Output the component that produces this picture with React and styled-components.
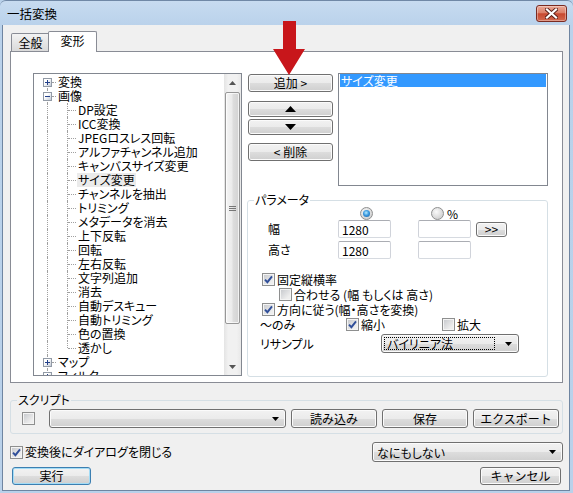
import React from 'react';
import styled, { createGlobalStyle } from 'styled-components';

const GlobalStyle = createGlobalStyle`
  html, body {
    margin: 0;
    padding: 0;
    background: #b9d1ea;
  }
  body {
    font-family: "Noto Sans CJK JP", "Liberation Sans", sans-serif;
    font-size: 12px;
    color: #000;
    font-feature-settings: "palt";
  }
  * {
    box-sizing: border-box;
  }
`;

const Window = styled.div`
  position: relative;
  width: 573px;
  height: 493px;
  display: flex;
  flex-direction: column;
  background: linear-gradient(#c7dbf0 0px, #bad2eb 24px, #b9d1ea 100%);
  border-top: 1px solid #7088a6;
  border-radius: 6px 6px 0 0;
  overflow: hidden;
`;

const TitleBar = styled.div`
  height: 24px;
  flex: none;
  display: flex;
  align-items: center;
  justify-content: space-between;
  padding: 2px 6px 0 6px;
`;

const Title = styled.span`
  font-size: 12.5px;
  line-height: 14px;
  margin-left: 1px;
`;

const CloseButton = styled.div`
  width: 31px;
  height: 17px;
  margin-top: -1px;
  display: flex;
  align-items: center;
  justify-content: center;
  border: 1px solid #7a2b22;
  border-radius: 3px;
  background: linear-gradient(#eaa897 0%, #dc8069 45%, #c8482f 52%, #d2694f 100%);
  box-shadow: inset 0 0 0 1px rgba(255, 255, 255, 0.35);
`;

const Client = styled.div`
  flex: 1;
  margin: 0 3px 2px 2px;
  border: 1px solid #6f85a1;
  border-top: none;
  background: #f0f0f0;
  padding: 6px 6px 0 7px;
  display: flex;
  flex-direction: column;
`;

const TabStrip = styled.div`
  height: 20px;
  display: flex;
  align-items: flex-end;
  padding-left: 1px;
`;

const Tab = styled.div`
  position: relative;
  z-index: ${(p) => (p.$active ? 2 : 1)};
  width: ${(p) => (p.$active ? 49 : 39)}px;
  height: ${(p) => (p.$active ? 21 : 18)}px;
  margin-left: ${(p) => (p.$active ? -2 : 0)}px;
  margin-bottom: ${(p) => (p.$active ? -1 : 0)}px;
  border: 1px solid #898c95;
  border-bottom: none;
  border-radius: 2px 2px 0 0;
  background: ${(p) => (p.$active ? '#fff' : 'linear-gradient(#f3f3f3, #e6e6e6 50%, #dadada)')};
  display: flex;
  align-items: center;
  justify-content: center;
  padding-bottom: ${(p) => (p.$active ? 3 : 0)}px;
  line-height: 14px;
`;

const Panel = styled.div`
  height: 332px;
  flex: none;
  border: 1px solid #898c95;
  background: #fff;
  padding: 21px 0 0 22px;
  display: flex;
  align-items: flex-start;
`;

const TreeBox = styled.div`
  width: 209px;
  height: 303px;
  flex: none;
  border: 1px solid #828790;
  display: flex;
  background: #fff;
`;

const TreeItems = styled.div`
  flex: 1;
  overflow: hidden;
  padding: 1px 0 0 3px;
`;

const TreeRow = styled.div`
  display: flex;
  height: 14px;
  align-items: center;
  white-space: nowrap;
`;

const Guide = styled.span`
  position: relative;
  flex: none;
  width: 20px;
  height: 14px;

  &::before {
    content: '';
    display: ${(p) => (p.$up || p.$down ? 'block' : 'none')};
    position: absolute;
    left: 10px;
    top: ${(p) => (p.$up ? '0' : '7px')};
    bottom: ${(p) => (p.$down ? '0' : '7px')};
    border-left: 1px dotted #a0a0a0;
  }

  &::after {
    content: '';
    display: ${(p) => (p.$stub ? 'block' : 'none')};
    position: absolute;
    left: ${(p) => (p.$box ? 15 : 11)}px;
    right: 1px;
    top: 7px;
    border-top: 1px dotted #a0a0a0;
  }
`;

const Expander = styled.span`
  position: absolute;
  z-index: 1;
  left: 6px;
  top: 3px;
  width: 9px;
  height: 9px;
  border: 1px solid #929aa6;
  background: linear-gradient(135deg, #ffffff 35%, #c3cad5);

  &::before {
    content: '';
    position: absolute;
    left: 1px;
    right: 1px;
    top: 3px;
    height: 1px;
    background: #24418a;
  }

  &::after {
    content: '';
    display: ${(p) => (p.$open ? 'none' : 'block')};
    position: absolute;
    top: 1px;
    bottom: 1px;
    left: 3px;
    width: 1px;
    background: #24418a;
  }
`;

const TreeLabel = styled.span`
  padding: 0 1px;
  height: 14px;
  line-height: 14px;
  background: ${(p) => (p.$selected ? '#ebebeb' : 'transparent')};
`;

const ScrollBar = styled.div`
  width: 17px;
  flex: none;
  display: flex;
  flex-direction: column;
  background: linear-gradient(to right, #e4e4e4, #f1f1f1 25%, #f1f1f1 75%, #e8e8e8);
`;

const ScrollArrow = styled.div`
  height: 17px;
  flex: none;
  display: flex;
  align-items: center;
  justify-content: center;
`;

const ScrollTrack = styled.div`
  flex: 1;
`;

const Thumb = styled.div`
  height: 232px;
  margin: 1px 1px 0 1px;
  border: 1px solid #979797;
  border-radius: 2px;
  background: linear-gradient(to right, #f5f5f5, #ebebeb 45%, #dddddd 55%, #d3d3d3);
  box-shadow: inset 0 0 0 1px rgba(255, 255, 255, 0.7);
  display: flex;
  align-items: center;
  justify-content: center;
`;

const RightArea = styled.div`
  width: 301px;
  margin-left: 5px;
  display: flex;
  flex-direction: column;
`;

const TopRow = styled.div`
  height: 113px;
  display: flex;
`;

const ButtonColumn = styled.div`
  width: 85px;
  margin-left: 1px;
  padding-top: 1px;
  display: flex;
  flex-direction: column;
`;

const Button = styled.button`
  width: ${(p) => p.$w || 85}px;
  height: ${(p) => p.$h || 18}px;
  flex: none;
  margin: ${(p) => p.$m || '0'};
  padding: 0;
  display: flex;
  align-items: center;
  justify-content: center;
  font-family: inherit;
  font-size: 12px;
  line-height: 14px;
  color: #000;
  border: 1px solid ${(p) => (p.$default ? '#3c7fb1' : '#707070')};
  border-radius: 3px;
  background: linear-gradient(#f2f2f2 0%, #ebebeb 50%, #dddddd 51%, #cfcfcf 100%);
  box-shadow: inset 0 0 0 1px ${(p) => (p.$default ? '#a3dcf6' : '#fbfbfb')};
`;

const ListBox = styled.div`
  width: 210px;
  height: 113px;
  margin-left: 5px;
  border: 1px solid #828790;
  padding: 0 1px;
  background: #fff;
`;

const ListItem = styled.div`
  height: 13px;
  line-height: 13px;
  padding-left: 1px;
  color: ${(p) => (p.$selected ? '#fff' : '#000')};
  background: ${(p) => (p.$selected ? '#3399ff' : 'transparent')};
`;

const Group = styled.fieldset`
  margin: ${(p) => p.$m || '0'};
  width: ${(p) => p.$w}px;
  height: ${(p) => p.$h}px;
  min-width: 0;
  padding: ${(p) => p.$pad};
  border: 1px solid #d5dfe5;
  border-radius: 3px;
  display: flex;
  flex-direction: column;
`;

const Legend = styled.legend`
  padding: 0 1px;
  margin-left: ${(p) => p.$ml}px;
  height: 14px;
  line-height: 14px;
`;

const Row = styled.div`
  display: flex;
  align-items: center;
  height: ${(p) => p.$h}px;
  margin-top: ${(p) => p.$mt || 0}px;
  white-space: nowrap;
`;

const Cell = styled.span`
  flex: none;
  width: ${(p) => p.$w}px;
  padding-left: ${(p) => p.$pl || 0}px;
  line-height: 14px;
`;

const TextBox = styled.input`
  width: 53px;
  height: 18px;
  flex: none;
  margin-left: ${(p) => p.$ml || 0}px;
  padding: 0 0 0 3px;
  border: 1px solid;
  border-color: #abadb3 #d0d3da #d6dae0 #d0d3da;
  border-radius: 2px;
  font-family: inherit;
  font-size: 12px;
  color: #000;
  background: #fff;
  outline: none;
`;

const Radio = styled.span`
  position: relative;
  flex: none;
  width: 13px;
  height: 13px;
  margin-left: ${(p) => p.$ml || 0}px;
  border: 1px solid #8e8f8f;
  border-radius: 50%;
  background: radial-gradient(circle at 40% 35%, #fafafa, #d4d4d4 70%);

  &::after {
    content: '';
    display: ${(p) => (p.$checked ? 'block' : 'none')};
    position: absolute;
    left: 2px;
    top: 2px;
    width: 7px;
    height: 7px;
    border-radius: 50%;
    background: radial-gradient(circle at 45% 40%, #b7ecff 0%, #3c9ae0 45%, #155a9c 100%);
  }
`;

const CheckBox = styled.span`
  position: relative;
  flex: none;
  width: 13px;
  height: 13px;
  margin-left: ${(p) => p.$ml || 0}px;
  margin-right: 2px;
  border: 1px solid #8e8f8f;
  background: #f4f4f4;
  display: flex;
  align-items: center;
  justify-content: center;

  &::before {
    content: '';
    position: absolute;
    inset: 1px;
    background: linear-gradient(135deg, #c9cbcf, #eeeeee 80%);
  }

  svg {
    position: relative;
  }
`;

const Percent = styled.span`
  margin-left: 3px;
  line-height: 13px;
`;

const Combo = styled.div`
  width: ${(p) => p.$w}px;
  height: ${(p) => p.$h || 19}px;
  flex: none;
  margin-left: ${(p) => p.$ml || 0}px;
  display: flex;
  align-items: center;
  border: 1px solid #707070;
  border-radius: 3px;
  background: linear-gradient(#f2f2f2 0%, #ebebeb 50%, #dddddd 51%, #cfcfcf 100%);
  box-shadow: inset 0 0 0 1px #fbfbfb;
  padding: 0 6px 0 2px;
`;

const ComboText = styled.span`
  flex: 1;
  height: 13px;
  line-height: 12px;
  padding-left: ${(p) => (p.$focus ? 2 : 1)}px;
  border: 1px dotted ${(p) => (p.$focus ? '#000' : 'transparent')};
  margin-right: 10px;
`;

const ScriptRow = styled.div`
  display: flex;
  align-items: center;
  height: 19px;
  margin-top: 2px;
`;

const FooterRow = styled.div`
  display: flex;
  align-items: center;
  justify-content: space-between;
  height: ${(p) => p.$h}px;
  margin-top: ${(p) => p.$mt}px;
`;

const CheckLabel = styled.label`
  display: flex;
  align-items: center;
  line-height: 14px;
`;

const Annotation = styled.svg`
  position: absolute;
  left: 273px;
  top: 20px;
`;

const CheckMark = () => (
  <svg width="9" height="9" viewBox="0 0 9 9">
    <path d="M1 4.6 L3.4 7.2 L8 1.4" fill="none" stroke="#2f4e99" strokeWidth="1.9" />
  </svg>
);

const Check = ({ checked, ml, children }) => (
  <CheckLabel>
    <CheckBox $ml={ml}>{checked && <CheckMark />}</CheckBox>
    {children}
  </CheckLabel>
);

const DownArrow = ({ color = '#000' }) => (
  <svg width="7" height="4" viewBox="0 0 7 4">
    <path d="M0 0 H7 L3.5 4 Z" fill={color} />
  </svg>
);

const UpArrow = ({ color = '#000' }) => (
  <svg width="7" height="4" viewBox="0 0 7 4">
    <path d="M0 4 H7 L3.5 0 Z" fill={color} />
  </svg>
);

const BigArrow = ({ up }) => (
  <svg width="11" height="6" viewBox="0 0 11 6">
    <path d={up ? 'M0 6 H11 L5.5 0 Z' : 'M0 0 H11 L5.5 6 Z'} fill="#000" />
  </svg>
);

const imageItems = [
  'DP設定',
  'ICC変換',
  'JPEGロスレス回転',
  'アルファチャンネル追加',
  'キャンバスサイズ変更',
  'サイズ変更',
  'チャンネルを抽出',
  'トリミング',
  'メタデータを消去',
  '上下反転',
  '回転',
  '左右反転',
  '文字列追加',
  '消去',
  '自動デスキュー',
  '自動トリミング',
  '色の置換',
  '透かし',
];

const RootRow = ({ label, open, first }) => (
  <TreeRow>
    <Guide $up={!first} $down $stub $box>
      <Expander $open={open} />
    </Guide>
    <TreeLabel>{label}</TreeLabel>
  </TreeRow>
);

const Tree = () => (
  <TreeBox>
    <TreeItems>
      <RootRow label="変換" first />
      <RootRow label="画像" open />
      {imageItems.map((item, i) => (
        <TreeRow key={item}>
          <Guide $up $down />
          <Guide $up $down={i < imageItems.length - 1} $stub />
          <TreeLabel $selected={item === 'サイズ変更'}>{item}</TreeLabel>
        </TreeRow>
      ))}
      <RootRow label="マップ" />
      <RootRow label="フィルタ" />
    </TreeItems>
    <ScrollBar>
      <ScrollArrow>
        <UpArrow color="#555" />
      </ScrollArrow>
      <Thumb>
        <svg width="7" height="5" viewBox="0 0 7 5">
          <path d="M0 0.5 H7 M0 2.5 H7 M0 4.5 H7" stroke="#777" strokeWidth="1" />
        </svg>
      </Thumb>
      <ScrollTrack />
      <ScrollArrow>
        <DownArrow color="#555" />
      </ScrollArrow>
    </ScrollBar>
  </TreeBox>
);

const Parameters = () => (
  <Group $w={301} $h={184} $m="7px 0 0 0" $pad="0 12px">
    <Legend $ml={-6}>パラメータ</Legend>
    <Row $h={13}>
      <Radio $ml={100} $checked />
      <Radio $ml={58} />
      <Percent>%</Percent>
    </Row>
    <Row $h={18}>
      <Cell $w={78} $pl={8}>幅</Cell>
      <TextBox readOnly value="1280" />
      <TextBox readOnly value="" $ml={27} />
      <Button $w={31} $h={15} $m="0 0 0 5px">&gt;&gt;</Button>
    </Row>
    <Row $h={18} $mt={3}>
      <Cell $w={78} $pl={8}>高さ</Cell>
      <TextBox readOnly value="1280" />
      <TextBox readOnly value="" $ml={27} />
    </Row>
    <Row $h={15} $mt={13}>
      <Check checked ml={2}>固定縦横率</Check>
    </Row>
    <Row $h={15}>
      <Check ml={19}>合わせる (幅 もしくは 高さ)</Check>
    </Row>
    <Row $h={15}>
      <Check checked ml={2}>方向に従う(幅・高さを変換)</Check>
    </Row>
    <Row $h={15}>
      <Cell $w={86}>～のみ</Cell>
      <Cell $w={96}>
        <Check checked>縮小</Check>
      </Cell>
      <Check>拡大</Check>
    </Row>
    <Row $h={19} $mt={2}>
      <Cell $w={121}>リサンプル</Cell>
      <Combo $w={138}>
        <ComboText $focus>バイリニア法</ComboText>
        <DownArrow />
      </Combo>
    </Row>
  </Group>
);

const App = () => {
  return (
    <>
      <GlobalStyle />
      <Window>
        <TitleBar>
          <Title>一括変換</Title>
          <CloseButton>
            <svg width="13" height="11" viewBox="0 0 13 11">
              <path d="M2 1.5 L11 9.5 M11 1.5 L2 9.5" stroke="#5b1f18" strokeWidth="4" strokeLinecap="square" />
              <path d="M2 1.5 L11 9.5 M11 1.5 L2 9.5" stroke="#fff" strokeWidth="2.2" strokeLinecap="square" />
            </svg>
          </CloseButton>
        </TitleBar>

        <Client>
          <TabStrip>
            <Tab>全般</Tab>
            <Tab $active>変形</Tab>
          </TabStrip>

          <Panel>
            <Tree />
            <RightArea>
              <TopRow>
                <ButtonColumn>
                  <Button>追加 &gt;</Button>
                  <Button $h={16} $m="9px 0 0 0">
                    <BigArrow up />
                  </Button>
                  <Button $h={16} $m="2px 0 0 0">
                    <BigArrow />
                  </Button>
                  <Button $m="8px 0 0 0">&lt; 削除</Button>
                </ButtonColumn>
                <ListBox>
                  <ListItem $selected>サイズ変更</ListItem>
                </ListBox>
              </TopRow>
              <Parameters />
            </RightArea>
          </Panel>

          <Group $w={553} $h={41} $m="10px 0 0 0" $pad="0 3px 0 11px">
            <Legend $ml={-5}>スクリプト</Legend>
            <ScriptRow>
              <CheckBox />
              <Combo $w={237} $ml={12}>
                <ComboText />
                <DownArrow />
              </Combo>
              <Button $w={86} $h={19} $m="0 0 0 5px">読み込み</Button>
              <Button $w={86} $h={19} $m="0 0 0 5px">保存</Button>
              <Button $w={86} $h={19} $m="0 0 0 5px">エクスポート</Button>
            </ScriptRow>
          </Group>

          <FooterRow $h={20} $mt={8}>
            <Check checked>変換後にダイアログを閉じる</Check>
            <Combo $w={191} $h={20}>
              <ComboText>なにもしない</ComboText>
              <DownArrow />
            </Combo>
          </FooterRow>

          <FooterRow $h={18} $mt={5}>
            <Button $w={79} $m="0 0 0 2px" $default>実行</Button>
            <Button $w={81} $m="0 2px 0 0">キャンセル</Button>
          </FooterRow>
        </Client>

        <Annotation width="32" height="55" viewBox="0 0 32 55">
          <path d="M10 0 H23 V28 H32 L16 54 L0 28 H10 Z" fill="#c8161b" />
        </Annotation>
      </Window>
    </>
  );
};

export default App;
